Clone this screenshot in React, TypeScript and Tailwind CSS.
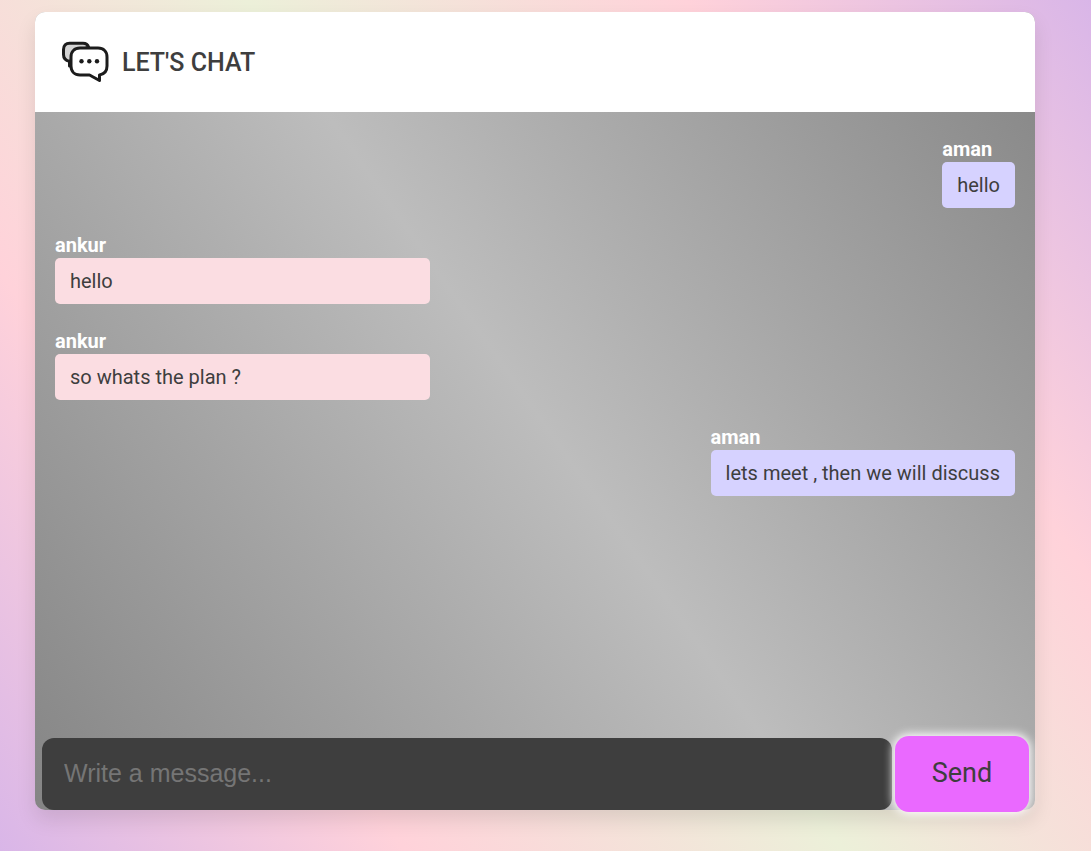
type Message = { id: number; author: string; text: string; own: boolean };

const messages: Message[] = [
  { id: 1, author: 'aman', text: 'hello', own: true },
  { id: 2, author: 'ankur', text: 'hello', own: false },
  { id: 3, author: 'ankur', text: 'so whats the plan ?', own: false },
  { id: 4, author: 'aman', text: 'lets meet , then we will discuss', own: true },
];

function ChatLogo() {
  return (
    <svg viewBox="0 0 48 42" className="h-[42px] w-12" fill="none" stroke="#1c1c1c" strokeWidth="3" strokeLinejoin="round" strokeLinecap="round" aria-hidden="true">
      <path d="M8.500 25v-4.600C4.500 19.500 2.500 17 2.500 13.500V8.500c0-4 2.500-6.300 6-6.300h13.500c2.800 0 4.800 1.300 5.600 4L12 12Z" fill="#d4d4d4" />
      <path d="M19 7h18c5.500 0 9 3.500 9 9v9c0 5-2.800 8.200-7.500 8.900V39.500l-10-5.500H19c-5.500 0-9-3.500-9-9v-9c0-5.500 3.500-9 9-9Z" fill="white" />
      <g fill="#1c1c1c" stroke="none">
        <circle cx="20.500" cy="20.300" r="2.200" />
        <circle cx="28.300" cy="20.300" r="2.200" />
        <circle cx="36" cy="20.300" r="2.200" />
      </g>
    </svg>
  );
}

function MessageItem({ message }: { message: Message }) {
  return (
    <li className={message.own ? 'max-w-[75%] self-end' : 'w-[375px] max-w-full self-start'}>
      <p className="text-xl leading-[26px] font-bold text-white">{message.author}</p>
      <p className={message.own ? 'rounded-[5px] bg-[#d6d2ff] px-[15px] py-[10px] text-xl leading-[26px]' : 'rounded-[5px] bg-[#fbdde2] px-[15px] py-[10px] text-xl leading-[26px]'}>
        {message.text}
      </p>
    </li>
  );
}

export default function App() {
  return (
    <div className="flex min-h-screen flex-col bg-[linear-gradient(55deg,#d9b6e8_0%,#ffd2da_24%,#ecf0d9_50%,#ffd2da_76%,#d9b6e8_100%)] pt-3 pr-14 pb-[41px] pl-[35px] font-['Roboto',sans-serif] text-[#3e3e3e]">
      <main className="flex grow flex-col rounded-[10px] bg-[linear-gradient(55deg,#858585_0%,#bdbdbd_50%,#858585_100%)] shadow-[0_10px_20px_rgba(0,0,0,0.1)]">
        <header className="flex h-[100px] items-center gap-[13px] rounded-t-[10px] bg-white pl-[26px]">
          <ChatLogo />
          <h1 className="pt-0.5 text-[25px] leading-8 font-medium">LET'S CHAT</h1>
        </header>
        <ul className="flex grow flex-col gap-6 px-5 py-6">
          {messages.map((m) => (
            <MessageItem key={m.id} message={m} />
          ))}
        </ul>
        <form className="-mb-0.5 flex items-center gap-[3px] pr-1.5 pl-[7px] font-['Liberation_Sans',sans-serif]" onSubmit={(e) => e.preventDefault()}>
          <input
            aria-label="Message"
            placeholder="Write a message..."
            className="h-[72px] min-w-0 grow rounded-xl bg-[#3e3e3e] px-[22px] pb-0.5 text-[25px] text-white outline-none placeholder:text-[#757575]"
          />
          <button type="submit" className="h-[76px] w-[134px] rounded-[14px] bg-[#ea69ff] pb-0.5 font-['Roboto',sans-serif] text-[27px] shadow-[0_0_10px_2px_#ffffff]">
            Send
          </button>
        </form>
      </main>
    </div>
  );
}
